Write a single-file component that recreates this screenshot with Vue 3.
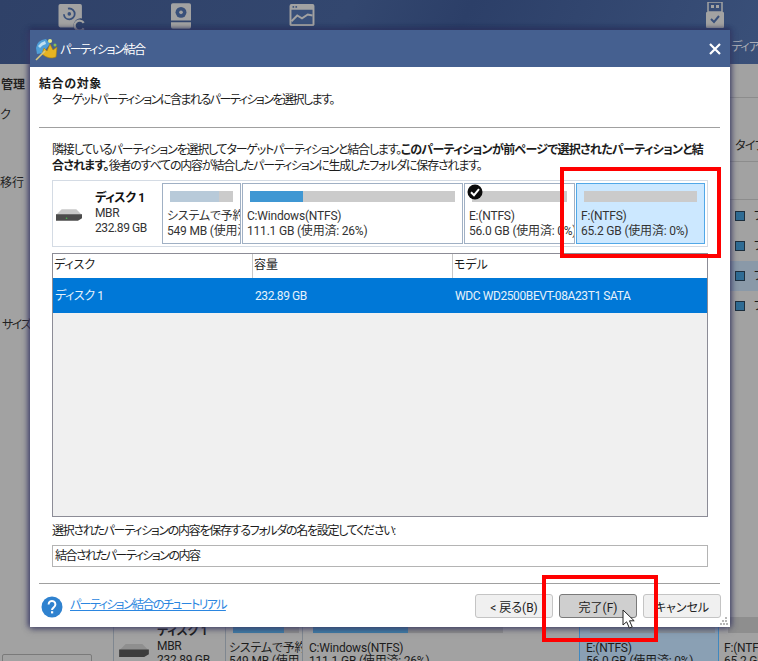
<script setup>
const cols = [{ n: 'ディスク', w: 200 }, { n: '容量', w: 200 }, { n: 'モデル', w: 254 }]
const row = ['ディスク 1', '232.89 GB', 'WDC WD2500BEVT-08A23T1 SATA']
const squares = [211, 241, 271, 301]
</script>

<template>
  <div class="screen">
    <header class="appbar">
      <svg class="tool t1" viewBox="0 0 30 30" width="30" height="27"><path d="M2 0h22q2 0 2 2v14a8 8 0 0 0-9 10H2q-2 0-2-2V2q0-2 2-2z" fill="#a2a2a2"/><circle cx="12" cy="11" r="6" fill="none" stroke="#39507a" stroke-width="2" stroke-dasharray="18 8"/><circle cx="12" cy="11" r="2" fill="#39507a"/><path d="M28 21a5.5 5.5 0 1 0 0 6" fill="none" stroke="#a2a2a2" stroke-width="2.4"/></svg>
      <svg class="tool t2" viewBox="0 0 22 28" width="20" height="26"><path d="M2 0h18q2 0 2 2v17H0V2q0-2 2-2z" fill="#a2a2a2"/><circle cx="11" cy="10" r="6" fill="#39507a"/><circle cx="11" cy="10" r="2" fill="#a2a2a2"/><path d="M0 21h22v5q0 2-2 2H2q-2 0-2-2z" fill="#a2a2a2"/></svg>
      <svg class="tool t3" viewBox="0 0 26 24" width="26" height="23"><rect width="26" height="23" rx="2" fill="#a2a2a2"/><rect x="2" y="6" width="22" height="15" fill="#39507a"/><circle cx="4" cy="3" r="1" fill="#39507a"/><circle cx="7" cy="3" r="1" fill="#39507a"/><path d="M2 18l6-6 5 3 6-4 5 1" fill="none" stroke="#a2a2a2" stroke-width="2"/></svg>
      <svg class="tool t4" viewBox="0 0 18 26" width="18" height="26"><path d="M2 0h14v10H2z" fill="none" stroke="#a2a2a2" stroke-width="1.5"/><rect x="5" y="3" width="3" height="3" fill="#a2a2a2"/><rect x="10" y="3" width="3" height="3" fill="#a2a2a2"/><rect y="10" width="18" height="16" rx="1" fill="#a2a2a2"/><path d="M5 17l3 3 5-6" fill="none" stroke="#39507a" stroke-width="2"/></svg>
      <span class="bg-label media">ディア</span>
    </header>

    <main class="backdrop">
      <span class="bg-text b1">管理</span>
      <span class="bg-text b2">ク</span>
      <span class="bg-text b3">移行</span>
      <span class="bg-text b4">サイズ</span>
      <span class="bg-text b5">タイプ</span>
      <div class="bg-line l1"></div>
      <div class="bg-line l2"></div>
      <div class="bg-line l3"></div>
      <div class="bg-row"></div>
      <template v-for="y in squares" :key="y">
        <i class="bg-square" :style="{ top: y - 64 + 'px' }"></i>
        <span class="bg-glyph" :style="{ top: y - 67 + 'px' }">フ</span>
      </template>
      <div class="bg-vline v1"></div>
      <div class="bg-vline v2"></div>
      <div class="bg-vline v3"></div>
      <svg class="bg-hdd" viewBox="0 0 32 14" width="32" height="13"><path d="M7 0h18l7 7H0z" fill="#8f8f8f"/><path d="M0 6h32v5l-5 3H0z" fill="#3c3c3c"/></svg>
      <div class="bg-disk">
        <b>ディスク 1</b><span>MBR</span><span>232.89 GB</span>
      </div>
      <div class="bg-part p1"><i></i><span>システムで予約</span><span>549 MB (使用</span></div>
      <div class="bg-part p2"><i></i><span>C:Windows(NTFS)</span><span>111.1 GB (使用済: 26%)</span></div>
      <div class="bg-part p3"><i></i><span>E:(NTFS)</span><span>56.0 GB (使用済: 0%)</span></div>
      <div class="bg-part p4"><i></i><span>F:(NTFS)</span><span>65.2 GB (使用済</span></div>
      <div class="bg-btn"></div>
    </main>

    <section class="dialog">
      <div class="titlebar">
        <svg class="logo" viewBox="0 0 24 24" width="24" height="24">
          <path d="M1 11q1-8 10-9l4 5-7 9-6 1z" fill="#4f9fd8"/>
          <path d="M3 9q3-4 7-5l1 3q-4 1-6 4z" fill="#bfe0f2"/>
          <path d="M7 17l2-6 3 3 3-7 3 6 4-3-1 10q-7 3-14-3z" fill="#e6b422" stroke="#a87f10" stroke-width=".6"/>
          <path d="M1 23l9-9" stroke="#d8c880" stroke-width="1.6"/>
          <circle cx="15" cy="4" r="2" fill="#e8ec86"/><circle cx="20" cy="8" r="1.5" fill="#8abf55"/>
        </svg>
        <span class="title">パーティション結合</span>
        <svg class="close" viewBox="0 0 12 12" width="12" height="12"><path d="M1 1l10 10M11 1L1 11" stroke="#fff" stroke-width="2.2"/></svg>
      </div>

      <div class="content">
        <div class="intro">
          <h1>結合の対象</h1>
          <p>ターゲットパーティションに含まれるパーティションを選択します。</p>
        </div>
        <hr />
        <p class="desc">隣接しているパーティションを選択してターゲットパーティションと結合します。<b>このパーティションが前ページで選択されたパーティションと結<br />合されます。</b>後者のすべての内容が結合したパーティションに生成したフォルダに保存されます。</p>

        <div class="diskmap">
          <div class="diskinfo">
            <svg class="hdd" viewBox="0 0 32 14" width="26" height="12">
              <path d="M7 0h18l7 7H0z" fill="#c9c9c9"/>
              <path d="M0 6h32v5l-5 3H0z" fill="#4c4c4c"/>
              <circle cx="13" cy="11" r="1" fill="#45c04c"/>
            </svg>
            <div class="disktext"><b>ディスク 1</b><span>MBR</span><span>232.89 GB</span></div>
          </div>
          <div class="part sys">
            <div class="bar"><i style="width: 78%" class="pale"></i></div>
            <span>システムで予約</span><span>549 MB (使用済: 74%)</span>
          </div>
          <div class="part cdrive">
            <div class="bar"><i style="width: 26%"></i></div>
            <span>C:Windows(NTFS)</span><span>111.1 GB (使用済: 26%)</span>
          </div>
          <div class="part edrive">
            <svg class="check" viewBox="0 0 16 16" width="16" height="16"><circle cx="8" cy="8" r="7.5" fill="#0c0c0c"/><path d="M4 8.2l3 3 5-6" fill="none" stroke="#fff" stroke-width="2"/></svg>
            <div class="bar"></div>
            <span>E:(NTFS)</span><span>56.0 GB (使用済: 0%)</span>
          </div>
          <div class="part fdrive">
            <div class="bar"></div>
            <span>F:(NTFS)</span><span>65.2 GB (使用済: 0%)</span>
          </div>
        </div>

        <div class="table">
          <div class="thead"><div v-for="c in cols" :key="c.n" class="th" :style="{ width: c.w + 'px' }">{{ c.n }}</div></div>
          <div class="tr"><div v-for="(v, i) in row" :key="v" class="td" :style="{ width: cols[i].w + 'px' }">{{ v }}</div></div>
        </div>

        <label class="fieldlabel">選択されたパーティションの内容を保存するフォルダの名を設定してください:</label>
        <div class="input">結合されたパーティションの内容</div>
        <hr class="foot" />
        <div class="footer">
          <svg class="help" viewBox="0 0 22 22" width="22" height="22"><circle cx="11" cy="11" r="10.5" fill="#2f82cf"/><path d="M7.6 8.4a3.4 3.4 0 1 1 5.2 2.9c-1.2.8-1.8 1.2-1.8 2.7" fill="none" stroke="#fff" stroke-width="2"/><rect x="10" y="15.2" width="2.2" height="2.2" fill="#fff"/></svg>
          <a class="link">パーティション結合のチュートリアル</a>
          <div class="buttons">
            <button>&lt; 戻る(B)</button>
            <button class="active">完了(F)</button>
            <button>キャンセル</button>
          </div>
        </div>
      </div>
      <svg class="grip" viewBox="0 0 8 8" width="8" height="8"><path d="M5 0h2v2H5zM2 3h2v2H2zM5 3h2v2H5zM0 6h2v2H0zM3 6h2v2H3zM6 6h2v2H6z" fill="#b8b8b8"/></svg>
    </section>

    <div class="mark m1"></div>
    <div class="mark m2"></div>
    <svg class="cursor" viewBox="0 0 14 20" width="14" height="20"><path d="M1 1v15l3.6-3.2L7.4 19l2.8-1.2-2.7-6h4.7z" fill="#fff" stroke="#222" stroke-width="1"/></svg>
  </div>
</template>

<style>
html, body { margin: 0; background: #a0a0a0; }
</style>

<style scoped>
.screen {
  position: relative;
  width: 758px;
  height: 661px;
  overflow: hidden;
  background: #a3a3a3;
  color: #1c1c1c;
  font: 12px Roboto, "Noto Sans CJK JP", sans-serif;
  font-feature-settings: "palt";
}
.appbar {
  position: relative;
  height: 64px;
  background: linear-gradient(115deg, #2f4168 0%, #33476f 45%, #2c3f68 60%, #3a5079 100%);
}
.tool { position: absolute; }
.t1 { left: 57px; top: 4px; }
.t2 { left: 171px; top: 3px; }
.t3 { left: 289px; top: 4px; }
.t4 { left: 706px; top: 2px; }
.bg-label { position: absolute; color: #a9adb6; white-space: nowrap; }
.media { left: 731px; top: 37px; letter-spacing: -1px; }
.backdrop { position: relative; height: 597px; background: #a2a2a2; }
.bg-text { position: absolute; color: #222; line-height: 16px; white-space: nowrap; }
.b1 { left: 1px; top: 13px; font-weight: 700; }
.b2 { left: 0; top: 43px; }
.b3 { left: 0; top: 111px; }
.b4 { left: 2px; top: 253px; letter-spacing: -1.5px; }
.b5 { left: 735px; top: 74px; letter-spacing: -.5px; }
.bg-line { position: absolute; left: 730px; right: 0; height: 1px; background: #8c8c8c; }
.l1 { top: 33px; }
.l2 { top: 97px; }
.l3 { top: 135px; }
.bg-row { position: absolute; left: 730px; right: 0; top: 197px; height: 30px; background: #8a99a8; }
.bg-square {
  position: absolute;
  left: 735px;
  width: 8px;
  height: 8px;
  border: 1px solid #1e2f3e;
  background: #2f6c94;
}
.bg-glyph { position: absolute; left: 754px; line-height: 16px; }
.bg-vline { position: absolute; top: 553px; bottom: 0; width: 1px; background: #7f8790; }
.v1 { left: 113px; }
.v2 { left: 225px; }
.v3 { left: 302px; }
.bg-hdd { position: absolute; left: 118px; top: 580px; }
.bg-disk { position: absolute; left: 157px; top: 560px; display: flex; flex-direction: column; line-height: 14.5px; letter-spacing: -.3px; }
.bg-part {
  position: absolute;
  top: 553px;
  height: 44px;
  padding: 0 3px;
  display: flex;
  flex-direction: column;
  line-height: 13px;
  overflow: hidden;
  white-space: nowrap;
  box-sizing: border-box;
  letter-spacing: -.2px;
}
.bg-part i { display: block; height: 16px; background: #3f7da8; margin: 0 0 9px 4px; flex: none; }
.p1 { left: 226px; width: 76px; }
.p1 i { background: linear-gradient(90deg, #3f7da8 78%, #8e8e8e 78%); }
.p2 { left: 306px; width: 200px; }
.p2 i { background: linear-gradient(90deg, #3f7da8 50%, #8e8e8e 50%); }
.p3 { left: 579px; width: 140px; padding-left: 6px; background: #8aa0b4; border: 1px solid #3f88c0; border-width: 0 1px; }
.p3 i { background: #8a949c; }
.p4 { left: 721px; width: 60px; }
.p4 i { background: #8e8e8e; }
.bg-btn { position: absolute; left: 2px; top: 590px; width: 88px; height: 20px; border: 1px solid #7a7a7a; border-radius: 2px; }

.dialog {
  position: absolute;
  left: 30px;
  top: 30px;
  width: 700px;
  height: 597px;
  background: #fff;
  box-shadow: -3px 0 5px rgba(60, 60, 110, .55), 0 3px 6px rgba(60, 60, 90, .5), 3px 0 5px rgba(60, 60, 110, .4), 0 -2px 4px rgba(20, 30, 70, .5);
}
.titlebar {
  height: 37px;
  background: #456090;
  color: #fff;
  display: flex;
  align-items: center;
  padding: 0 9px 0 5px;
  gap: 1px;
}
.logo { flex: none; }
.title { font-size: 12px; letter-spacing: -1.4px; }
.close { margin-left: auto; }
.content { padding: 0 10px 0 9px; }
.intro { height: 60px; padding-top: 9px; box-sizing: border-box; }
h1 { margin: 0; font-size: 12px; font-weight: 700; line-height: 16px; letter-spacing: .6px; }
.intro p { margin: 0 0 0 13px; line-height: 16px; letter-spacing: -1.5px; }
hr { height: 1px; margin: 0; border: 0; background: #a0a0a0; }
.desc { margin: 14px 0 0 13px; line-height: 16px; font-size: 12px; white-space: nowrap; letter-spacing: -1.2px; }
.desc b { font-weight: 700; letter-spacing: -.7px; }
.diskmap {
  display: flex;
  gap: 1px;
  height: 61px;
  margin: 6px 12px 0 13px;
  padding: 2px 2px 2px 0;
  border: 1px solid #d4dbe4;
  box-sizing: content-box;
  width: 652px;
}
.diskinfo { width: 108px; flex: none; display: flex; align-items: center; padding-left: 3px; box-sizing: border-box; }
.hdd { flex: none; margin-top: 2px; }
.disktext { display: flex; flex-direction: column; margin-left: 13px; line-height: 15px; color: #333; letter-spacing: -.4px; }
.disktext b { color: #111; }
.part {
  position: relative;
  box-sizing: border-box;
  flex: none;
  height: 61px;
  border: 1px solid #a0b0c4;
  padding: 7px 0 0 4px;
  display: flex;
  flex-direction: column;
  line-height: 15px;
  white-space: nowrap;
  overflow: hidden;
  color: #333;
  letter-spacing: -.2px;
}
.bar { height: 11px; margin: 0 7px 7px 3px; background: #cbcbcb; flex: none; }
.bar i { display: block; height: 100%; background: #3f97d3; }
.bar i.pale { background: #b8cad9; }
.sys { width: 79px; }
.cdrive { width: 221px; }
.edrive { width: 111px; }
.check { position: absolute; left: 2px; top: 0; }
.fdrive { width: 129px; background: #cce8ff; border-color: #51a8e8; }
.table {
  margin: 6px 12px 0 13px;
  height: 262px;
  width: 654px;
  box-sizing: content-box;
  border: 1px solid #8c8c96;
  background: #f0f0f0;
}
.thead { display: flex; height: 24px; background: #fff; }
.th { box-sizing: border-box; padding: 3px 0 0 1px; border-right: 1px solid #c8c8c8; line-height: 16px; }
.th:last-child { border-right: 0; }
.tr { display: flex; height: 35px; background: #0078d7; color: #e6f2fb; }
.td { box-sizing: border-box; padding: 10px 0 0 2px; line-height: 16px; letter-spacing: -.4px; white-space: nowrap; }
.fieldlabel { display: block; margin: 6px 0 0 13px; line-height: 16px; letter-spacing: -1.3px; }
.input {
  box-sizing: border-box;
  margin: 6px 12px 0 13px;
  height: 22px;
  border: 1px solid #b4b4b4;
  padding: 2px 0 0 2px;
  line-height: 16px;
  letter-spacing: -1.5px;
}
.foot { margin-top: 16px; }
.footer { display: flex; align-items: flex-start; height: 45px; }
.help { margin: 12px 0 0 2px; flex: none; }
.link { margin: 13px 0 0 7px; color: #2b86e0; text-decoration: underline; letter-spacing: -1.6px; line-height: 16px; }
.buttons { margin: 10px -1px 0 auto; display: flex; gap: 6px; }
button {
  width: 78px;
  height: 24px;
  padding: 0;
  font: inherit;
  font-feature-settings: inherit;
  color: #222;
  background: #f0f0f0;
  border: 1px solid #c4c4c4;
  border-radius: 3px;
}
button.active { background: #cfcfcf; border-color: #7a7a7a; }
.grip { position: absolute; right: 2px; bottom: 2px; }
.mark { position: absolute; border: 4px solid #f00; box-sizing: border-box; }
.m1 { left: 560px; top: 167px; width: 161px; height: 91px; }
.m2 { left: 542px; top: 575px; width: 116px; height: 67px; }
.cursor { position: absolute; left: 622px; top: 609px; }
</style>
